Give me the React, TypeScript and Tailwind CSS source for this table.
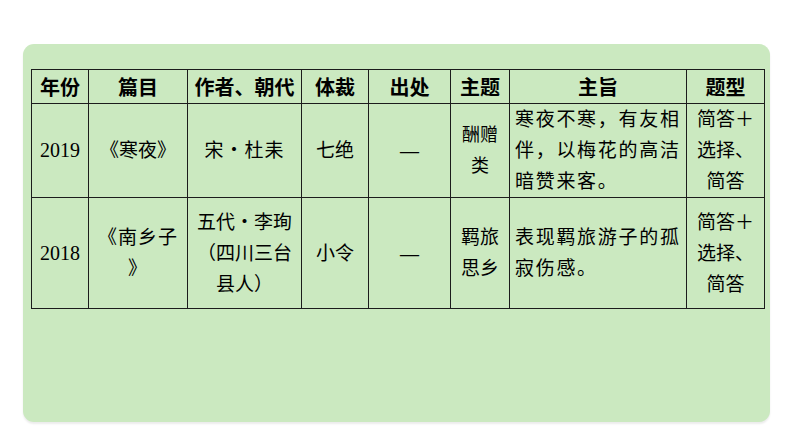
import React from "react";

const serif = { fontFamily: '"Liberation Serif", "Noto Sans CJK SC", serif' };
const sans = { fontFamily: '"Noto Sans CJK SC", "Noto Sans", sans-serif' };

const headers = ["年份", "篇目", "作者、朝代", "体裁", "出处", "主题", "主旨", "题型"];
const widths = ["w-[57px]", "w-[99px]", "w-[114px]", "w-[67px]", "w-[82px]", "w-[59px]", "w-[177px]", "w-[78px]"];

const cell = "border border-[#1c1c1c] align-middle text-center px-[4px] leading-[31px]";

const App: React.FC = () => {
  return (
    <div className="w-[794px] h-[447px] bg-white pt-[44px] pl-[23px]">
      <div className="w-[747px] h-[378px] rounded-[11px] bg-[#cbe9c0] shadow-[0_2px_2px_rgba(0,0,0,0.08)] pt-[25px] pl-[8px]">
        <table className="w-[733px] table-fixed border-collapse text-black text-[19px]" style={serif}>
          <colgroup>
            {widths.map((w, i) => (
              <col key={i} className={w} />
            ))}
          </colgroup>
          <thead>
            <tr className="h-[34px]">
              {headers.map((h) => (
                <th key={h} className="border border-[#1c1c1c] font-bold text-center text-[20px] leading-[32px] px-0" style={sans}>
                  {h}
                </th>
              ))}
            </tr>
          </thead>
          <tbody>
            {/* 2019 */}
            <tr className="h-[94px]">
              <td className={`${cell} text-[20px]`}>2019</td>
              <td className={cell}>《寒夜》</td>
              <td className={`${cell} tracking-[1px]`}>宋・杜耒</td>
              <td className={cell}>七绝</td>
              <td className={`${cell} font-semibold`}>—</td>
              <td className={`${cell} text-[18px]`}>酬赠类</td>
              <td className={`${cell} text-left tracking-[1.7px] pl-[5px] pr-[2px]`}>寒夜不寒，有友相伴，以梅花的高洁暗赞来客。</td>
              <td className={cell}>简答＋选择、简答</td>
            </tr>
            {/* 2018 */}
            <tr className="h-[111px]">
              <td className={`${cell} text-[20px]`}>2018</td>
              <td className={`${cell} tracking-[1px]`}>
                《南乡子
                <br />》
              </td>
              <td className={cell}>五代・李珣（四川三台县人）</td>
              <td className={cell}>小令</td>
              <td className={`${cell} font-semibold`}>—</td>
              <td className={cell}>羁旅思乡</td>
              <td className={`${cell} text-left tracking-[1.7px] pl-[5px] pr-[2px]`}>表现羁旅游子的孤寂伤感。</td>
              <td className={cell}>简答＋选择、简答</td>
            </tr>
          </tbody>
        </table>
      </div>
    </div>
  );
};

export default App;
